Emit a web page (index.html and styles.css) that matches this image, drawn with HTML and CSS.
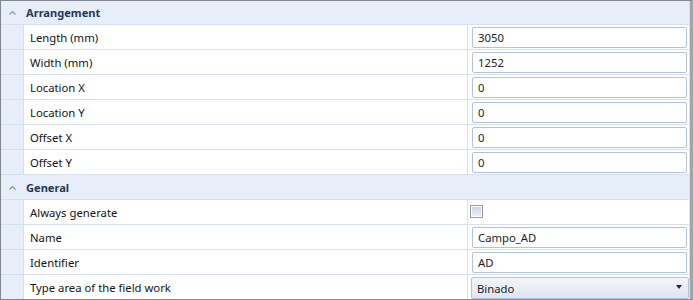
FILE: index.html
```html
<!DOCTYPE html>
<html>
<head>
<meta charset="utf-8">
<link rel="stylesheet" href="styles.css">
</head>
<body>
<div class="grid">
  <div class="cat first">
    <span class="chev"><svg width="7" height="4" viewBox="0 0 7 4"><path d="M0.5 3.5 L3.5 0.5 L6.5 3.5" fill="none" stroke="#8a9ab6" stroke-width="1.2"/></svg></span>
    <span class="cat-title">Arrangement</span>
  </div>
  <div class="row"><div class="gut"></div><div class="lbl">Length (mm)</div><div class="val"><div class="input">3050</div></div></div>
  <div class="row"><div class="gut"></div><div class="lbl">Width (mm)</div><div class="val"><div class="input">1252</div></div></div>
  <div class="row"><div class="gut"></div><div class="lbl">Location X</div><div class="val"><div class="input">0</div></div></div>
  <div class="row"><div class="gut"></div><div class="lbl">Location Y</div><div class="val"><div class="input">0</div></div></div>
  <div class="row"><div class="gut"></div><div class="lbl">Offset X</div><div class="val"><div class="input">0</div></div></div>
  <div class="row"><div class="gut"></div><div class="lbl">Offset Y</div><div class="val"><div class="input">0</div></div></div>
  <div class="cat">
    <span class="chev"><svg width="7" height="4" viewBox="0 0 7 4"><path d="M0.5 3.5 L3.5 0.5 L6.5 3.5" fill="none" stroke="#8a9ab6" stroke-width="1.2"/></svg></span>
    <span class="cat-title">General</span>
  </div>
  <div class="row"><div class="gut"></div><div class="lbl">Always generate</div><div class="val"><div class="check"></div></div></div>
  <div class="row"><div class="gut"></div><div class="lbl">Name</div><div class="val"><div class="input">Campo_AD</div></div></div>
  <div class="row"><div class="gut"></div><div class="lbl">Identifier</div><div class="val"><div class="input">AD</div></div></div>
  <div class="row"><div class="gut"></div><div class="lbl">Type area of the field work</div><div class="val"><div class="combo"><span>Binado</span><span class="arrow"></span></div></div></div>
</div>
</body>
</html>
```
FILE: styles.css
```css
html, body {
  margin: 0;
  padding: 0;
  background: #fff;
}
body {
  font-family: "Noto Sans", "Open Sans", sans-serif;
  font-size: 11.3px;
  color: #141414;
}
.grid {
  box-sizing: border-box;
  width: 693px;
  height: 300px;
  border: 1px solid #828790;
  border-right-width: 3px;
  border-right-color: #a0a4ab;
  overflow: hidden;
  background: #fff;
}
.cat {
  height: 24px;
  border-top: 1px solid #d6e0ef;
  background: #e8eef9;
  display: flex;
  align-items: center;
  border-right: 1px solid #d6e0ef;
}
.cat.first {
  border-top: none;
  height: 23px;
}
.chev {
  width: 25px;
  display: flex;
  justify-content: center;
  padding-top: 1px;
}
.chev svg { display: block; margin-left: -2px; }
.cat-title {
  font-weight: bold;
  color: #1e395b;
  font-size: 11.1px;
}
.row {
  height: 24px;
  border-top: 1px solid #d6e0ef;
  display: flex;
}
.gut {
  width: 22px;
  background: #e8eef9;
  border-right: 1px solid #d6e0ef;
}
.lbl {
  width: 437px;
  padding-left: 6px;
  border-right: 1px solid #d6e0ef;
  display: flex;
  align-items: center;
  white-space: nowrap;
}
.val {
  width: 221px;
  border-right: 1px solid #d6e0ef;
  position: relative;
}
.input {
  box-sizing: border-box;
  margin: 2px 2px 0 4px;
  height: 21px;
  border: 1px solid #b3c3da;
  border-radius: 2px;
  padding-left: 5px;
  line-height: 19px;
  color: #1e1e1e;
}
.check {
  box-sizing: border-box;
  width: 13px;
  height: 13px;
  margin: 5px 0 0 2px;
  border: 1px solid #8d9ab0;
  background: linear-gradient(#c9d2e0, #eef2f8);
  box-shadow: inset 0 0 0 1px #fff;
}
.combo {
  box-sizing: border-box;
  margin: 2px 0 0 3px;
  height: 22px;
  border: 1px solid #b3c3da;
  border-radius: 2px;
  background: linear-gradient(#f3f6fb, #dbe5f3);
  padding-left: 5px;
  padding-right: 6px;
  display: flex;
  align-items: center;
  justify-content: space-between;
  color: #1e1e1e;
}
.arrow {
  width: 0;
  height: 0;
  border-left: 3.5px solid transparent;
  border-right: 3.5px solid transparent;
  border-top: 4px solid #1e2a3a;
  margin-top: -2px;
}
```
